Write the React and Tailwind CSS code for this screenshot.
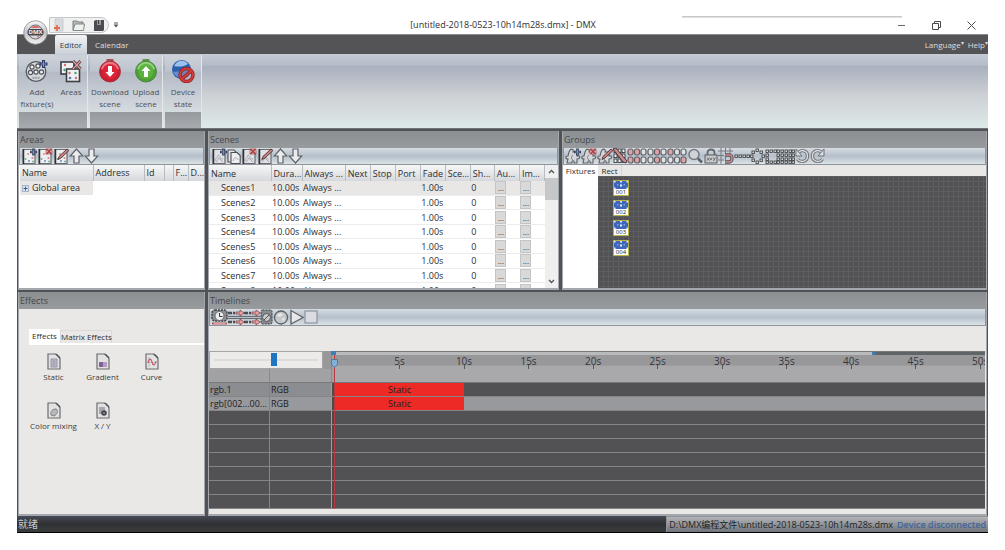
import React from "react";

const scenes = [1, 2, 3, 4, 5, 6, 7, 8];
const ticks = [5, 10, 15, 20, 25, 30, 35, 40, 45, 50];
const PERCENT_PER_SECOND = 1.985;

const sceneColumns = [
  { label: "Name", width: "w-[62px]" },
  { label: "Dura...", width: "w-[31px]" },
  { label: "Always ...", width: "w-[43px]" },
  { label: "Next", width: "w-[25px]" },
  { label: "Stop", width: "w-[25px]" },
  { label: "Port", width: "w-[25px]" },
  { label: "Fade", width: "w-[25px]" },
  { label: "Sce...", width: "w-[25px]" },
  { label: "Sh...", width: "w-[24px]" },
  { label: "Au...", width: "w-[25px]" },
  { label: "Im...", width: "w-[25px]" },
];

const areaColumns = [
  { label: "Name", width: "w-[73px]" },
  { label: "Address", width: "w-[51px]" },
  { label: "Id", width: "w-[20px]" },
  { label: "", width: "w-[9px]" },
  { label: "F...", width: "w-[15px]" },
  { label: "D...", width: "w-[17px]" },
];

const timelineRows = [
  { name: "rgb.1", type: "RGB", clip: "Static", label: "bg-[#8c8d90]", lane: "bg-[#525254]" },
  { name: "rgb[002...00...", type: "RGB", clip: "Static", label: "bg-[#98999c]", lane: "bg-[#98999c]" },
  {}, {}, {}, {}, {}, {}, {},
];

/* ---------- icons ---------- */

const Svg = ({ children, w = 16, h = 16, className = "" }) => (
  <svg width={w} height={h} viewBox={`0 0 ${w} ${h}`} fill="none" className={`shrink-0 ${className}`} aria-hidden="true">
    {children}
  </svg>
);

const PlusMark = () => (
  <>
    <path d="M12.500 0.500v7M9 4h7" stroke="#34405f" strokeWidth="2.600" />
    <path d="M12.500 1.500v5M10 4h5" stroke="#8798c4" strokeWidth="0.800" />
  </>
);

const CrossMark = () => (
  <>
    <rect x="9" y="1" width="6" height="5" fill="#f0b3b3" stroke="#923c40" strokeWidth="0.600" />
    <path d="M9.500 1l5 5M14.500 1l-5 5" stroke="#a53b40" strokeWidth="1.300" />
  </>
);

const PencilMark = () => (
  <path d="M5 11.500l1-3 8-7.500 2 1.500-8 7.500z" fill="#c98084" stroke="#4b3033" strokeWidth="0.900" />
);

const marks = { plus: <PlusMark />, cross: <CrossMark />, pencil: <PencilMark /> };

const AreaIcon = ({ mark }) => (
  <Svg>
    <path d="M2 1.500h12v14H2z" fill="#eceef0" stroke="#6b6d70" strokeWidth="1.200" />
    <path d="M2.500 1v15" stroke="#303235" strokeWidth="1.500" />
    <circle cx="7" cy="6" r="1.100" fill="#e28f8f" />
    <circle cx="4.500" cy="11" r="1.100" fill="#6bb58a" />
    <circle cx="8" cy="13" r="1" fill="#6d8fc4" />
    <circle cx="11.500" cy="10" r="1.100" fill="#d98a90" />
    <circle cx="12" cy="13.500" r="1" fill="#74b28c" />
    {marks[mark]}
  </Svg>
);

const SceneIcon = ({ mark }) => (
  <Svg>
    <path d="M2 1.500h12v14H2z" fill="#dfe1e4" stroke="#6b6d70" strokeWidth="1.200" />
    <path d="M2.500 1v15" stroke="#303235" strokeWidth="1.500" />
    <path d="M4 13c0-3 3-3 3-6 3 1 1 4 5 4M5 14l3-4 4 4" stroke="#a7aaae" />
    {marks[mark]}
  </Svg>
);

const CopyIcon = () => (
  <Svg w={14}>
    <path d="M1 2h6l3 3v9H1z" fill="#e3e5e8" stroke="#4e5054" strokeWidth="1.100" />
    <path d="M4 4.500h6l3.200 3v8H4z" fill="#eceef0" stroke="#4e5054" strokeWidth="1.100" />
    <path d="M6 13c1-4 4-4 5-1" stroke="#a7aaae" />
  </Svg>
);

const ArrowUp = () => (
  <Svg w={15}>
    <path d="M7.500 1l6.300 7H10v7H5V8H1.200z" fill="#e9ebed" stroke="#606266" strokeWidth="1.200" />
  </Svg>
);

const ArrowDown = () => (
  <Svg w={15}>
    <path d="M7.500 15l6.300-7H10V1H5v7H1.200z" fill="#e9ebed" stroke="#606266" strokeWidth="1.200" />
  </Svg>
);

const PuzzleIcon = ({ mark }) => (
  <Svg>
    <path
      d="M5 2c2-2 4 0 3 2h4v4c3-1 4 3 0 3v4H9c1-3-3-3-2 0H2l1-4C0 11 0 8 3 8l1-4z"
      fill="#d4d6d9"
      stroke="#5f6165"
      strokeWidth="1.100"
    />
    <path d="M8 7c-2 1-2 4 0 5" stroke="#77797d" />
    {marks[mark]}
  </Svg>
);

const LinkIcon = () => (
  <Svg w={14}>
    {[1, 5, 9].map((x) =>
      [1, 6, 11].map((y) => (
        <rect key={`${x}-${y}`} x={x} y={y} width="3" height="3.500" fill="#eceef0" stroke="#47494d" />
      ))
    )}
    <path d="M0 1l3-1 11 13-1 2-3-1z" fill="#c9898d" stroke="#44393b" />
  </Svg>
);

// Two rows of cells; `on` holds the indexes of the tinted ones.
const CellsIcon = ({ on }) => (
  <Svg w={20}>
    {[0, 1, 2, 3, 4, 5].map((i) => (
      <rect
        key={i}
        x={1 + (i % 3) * 6.5}
        y={i < 3 ? 1 : 9}
        width="5"
        height="6"
        rx="2"
        fill={on.includes(i) ? "#e0a2a6" : "#dfe1e4"}
        stroke="#5d5f63"
        strokeWidth="1.200"
      />
    ))}
  </Svg>
);

const LensIcon = () => (
  <Svg w={17}>
    <circle cx="7" cy="6.500" r="5" fill="#cfd3d8" stroke="#77797d" strokeWidth="1.500" />
    <path d="M11 10.500l4 4" stroke="#606266" strokeWidth="2.600" />
  </Svg>
);

const LockIcon = () => (
  <Svg w={14}>
    <path d="M3.500 8V4.500C3.500 0.500 10.500 0.500 10.500 4.500V8" stroke="#66686c" strokeWidth="1.800" />
    <rect x="1" y="7" width="12" height="8" fill="#c6c8cb" stroke="#5b5d61" />
    <path d="M3 9.500l2.500 3M5.500 9.500l-2.500 3M6 11h2M7 10v2M9 9.500l1.200 2M11.500 9.500l-2 3.500" stroke="#4c4e52" strokeWidth="0.700" />
  </Svg>
);

const MagnetIcon = () => (
  <Svg>
    <path d="M3 0v16M7.500 0v16M12 0v6M0 3h15M0 7.500h6M0 12h6" stroke="#77797d" />
    <path d="M7 7h4c4 0 4 7 0 7H7" stroke="#55575b" strokeWidth="3.400" />
    <path d="M7 7h4c4 0 4 7 0 7H7" stroke="#d0878c" strokeWidth="1.500" />
  </Svg>
);

const Cells = ({ points, w = 15 }) => (
  <Svg w={w}>
    {points.map(([x, y]) => (
      <rect key={`${x}-${y}`} x={x} y={y} width="2.400" height="2.400" fill="#e4e6e8" stroke="#3f4145" strokeWidth="0.900" />
    ))}
  </Svg>
);

const linePoints = [[1, 7], [5, 7], [9, 7], [13, 7]];
const ringPoints = [[6, 1], [10, 3], [12, 7], [10, 11], [6, 13], [2, 11], [0.6, 7], [2, 3]];
const boxPoints = [[1, 2], [5, 2], [9, 2], [12, 2], [1, 6], [1, 10], [1, 13], [5, 13], [9, 13], [12, 13], [12, 6], [12, 10]];
const gridPoints = [1, 5, 9, 12].flatMap((x) => [2, 6, 10, 13].map((y) => [x, y]));

const RotateIcon = ({ flip }) => (
  <Svg w={15}>
    <g transform={flip ? "translate(15 0) scale(-1 1)" : undefined}>
      <path d="M4 4C7 1 13 3 12.500 8.500 12 14 5 15 2.500 11" stroke="#6f7175" strokeWidth="3.200" />
      <path d="M4 4C7 1 13 3 12.500 8.500 12 14 5 15 2.500 11" stroke="#dcdee1" strokeWidth="1.300" />
      <path d="M1 1v7h6z" fill="#dcdee1" stroke="#6f7175" />
    </g>
  </Svg>
);

const ClockIcon = () => (
  <Svg w={17}>
    <rect x="1" y="1" width="15" height="11" rx="3" fill="#8d8f92" stroke="#3f4145" strokeDasharray="2 1" strokeWidth="1.500" />
    <circle cx="8.500" cy="7" r="4.500" fill="#eceef0" stroke="#66686c" />
    <path d="M8.500 4v3.500h3" stroke="#2f3134" />
    <path d="M1 14.500h15" stroke="#a8494c" strokeWidth="1.800" />
    <path d="M2.500 14.500h12" stroke="#efb0b0" strokeWidth="0.800" />
  </Svg>
);

const LanesIcon = () => (
  <Svg w={16}>
    <path d="M0 7.500h16M0 9.500h16" stroke="#6a6c70" />
    {[4, 13].map((y) => (
      <g key={y}>
        <path d={`M0 ${y}h4M5 ${y}h2`} stroke="#4b4d51" strokeWidth="2.500" />
        <path d={`M8 ${y - 1}h4v-2l4 3-4 3v-2h-4z`} fill="#eda3a3" stroke="#84484b" strokeWidth="0.800" />
      </g>
    ))}
  </Svg>
);

const FilmIcon = () => (
  <Svg w={13}>
    <rect x="1" y="1" width="11" height="14" rx="1.500" fill="#8a8c8f" stroke="#3f4145" strokeDasharray="2 1" />
    <circle cx="6.500" cy="8.500" r="4" fill="#c7c9cc" stroke="#505256" />
    <path d="M4 11l5-5" stroke="#505256" />
  </Svg>
);

const RecordIcon = () => (
  <Svg>
    <circle cx="8" cy="8.500" r="6.500" fill="#c6c8ca" stroke="#5d5f63" strokeWidth="1.300" />
    <path d="M4 7c1-3 4-3 6-2l-3 3zM9 9l3 0-2 4z" fill="#e6e8ea" />
  </Svg>
);

const PlayIcon = () => (
  <Svg w={15}>
    <path d="M2 1.500l12 7-12 6.500z" fill="#e6e8eb" stroke="#66686c" strokeWidth="1.400" />
  </Svg>
);

const StopIcon = () => (
  <Svg w={14}>
    <rect x="1" y="2" width="12" height="12" fill="#d9dde3" stroke="#8d929b" strokeWidth="1.200" />
  </Svg>
);

const AddFixtureIcon = () => (
  <Svg w={24} h={24}>
    <circle cx="11" cy="12.500" r="9.800" fill="#d7dadd" stroke="#55585c" strokeWidth="1.300" />
    {[[7, 8], [13, 7], [5.500, 13.500], [11, 13], [16.500, 13]].map(([x, y]) => (
      <circle key={`${x}-${y}`} cx={x} cy={y} r="2.100" fill="#eef0f1" stroke="#4e5155" strokeWidth="1.200" />
    ))}
    <path d="M8 19h6M8 17.500v2.500M11 17.500v2.500M14 17.500v2.500" stroke="#8c8f93" strokeWidth="0.800" />
    <path d="M18.500 1v8M14.500 5h8" stroke="#2d3c66" strokeWidth="3" />
    <path d="M18.500 2.200v5.600M15.700 5h5.600" stroke="#8497c6" strokeWidth="1" />
  </Svg>
);

const AreasIcon = () => (
  <Svg w={24} h={24}>
    <rect x="2" y="3" width="13" height="12" fill="#eef0f1" stroke="#3c3e42" strokeWidth="1.600" />
    <rect x="7.500" y="10" width="13" height="12.500" fill="#eef0f1" stroke="#3c3e42" strokeWidth="1.600" />
    <g fill="#d36c72">
      <circle cx="6" cy="6" r="1.200" />
      <circle cx="10.500" cy="14" r="1.200" />
      <circle cx="17" cy="19" r="1.200" />
    </g>
    <g fill="#4f9b72">
      <circle cx="5.500" cy="11" r="1.200" />
      <circle cx="16.500" cy="14" r="1.200" />
    </g>
    <circle cx="11" cy="19" r="1.300" fill="#5473b8" />
    <path d="M14 2l7.500 8M21.500 2l-7.500 8" stroke="#4a3236" strokeWidth="3" />
    <path d="M14 2l7.500 8M21.500 2l-7.500 8" stroke="#d99da1" strokeWidth="1.500" />
  </Svg>
);

const TransferIcon = ({ up }) => (
  <Svg w={24} h={24}>
    <path d="M8.500 1h7" stroke={up ? "#3f7f2c" : "#9f2530"} strokeWidth="1.500" />
    <circle cx="12" cy="12.500" r="10.500" fill={up ? "#4e9f36" : "#c91f31"} stroke={up ? "#3c7a2c" : "#a02632"} strokeWidth="0.800" />
    <path d="M3 10a9.200 9.200 0 0 1 18 0c-5 2-13 2-18 0z" fill={up ? "#a2d98a" : "#f28a94"} opacity="0.800" />
    <circle cx="12" cy="12.500" r="7.500" fill={up ? "#5bb23e" : "#dc2438"} />
    <path
      d={up ? "M12 7l4.500 5h-2.500v6h-4v-6H7.500z" : "M12 18l4.500-5h-2.500V7h-4v6H7.500z"}
      fill="#fff"
    />
  </Svg>
);

const DeviceIcon = () => (
  <Svg w={24} h={24}>
    <circle cx="10.500" cy="10.500" r="9.500" fill="#2c5fae" />
    <path d="M3 7c3-6 10-7 14-2-5 3-9 3-14 2z" fill="#9cc2ea" />
    <path d="M2 13c3 5 5 5 8 6V12z" fill="#5d90d4" />
    <circle cx="15.500" cy="16" r="6.500" fill="#b3a6ad" fillOpacity="0.500" stroke="#8e1d20" strokeWidth="3.400" />
    <path d="M11 20l9-8" stroke="#8e1d20" strokeWidth="3.400" />
    <circle cx="15.500" cy="16" r="6.500" stroke="#d23c3a" strokeWidth="2" />
    <path d="M11 20l9-8" stroke="#d23c3a" strokeWidth="2" />
  </Svg>
);

const EffectIcon = ({ kind }) => (
  <Svg w={14} h={17}>
    <path d="M1 1h8l4 4v11H1z" fill="#e2e2e2" stroke="#6c6d70" strokeWidth="1.200" />
    <path d="M8 1l5 5v-2L10 1z" fill="#55565a" />
    {kind === "static" && (
      <>
        <path d="M4 6h6v8H4z" fill="#c3c1cc" stroke="#85819a" strokeWidth="0.800" />
        <path d="M5.500 8h3M5.500 10h3M5.500 12h3" stroke="#85819a" strokeWidth="0.800" />
      </>
    )}
    {kind === "gradient" && (
      <>
        <path d="M3 9h8v5H3z" fill="#b49cc4" />
        <path d="M3 9h4v5H3z" fill="#7f6299" />
      </>
    )}
    {kind === "curve" && (
      <>
        <path d="M2 9.500h10M4 4v10" stroke="#a9aaad" strokeWidth="0.700" />
        <path d="M3 10c1-5 3-5 4-1s3 4 4-1" stroke="#c9565f" strokeWidth="1.100" />
      </>
    )}
    {kind === "mixing" && <path d="M4 13c-1-4 2-6 5-6 3 1 1 6-2 7z" fill="#b7b8bb" stroke="#7f8084" />}
    {kind === "xy" && (
      <>
        <path d="M3 5h6v7H3z" fill="#a7a8ab" />
        <circle cx="8" cy="11" r="2.800" fill="#47484b" />
        <circle cx="8" cy="11" r="1" fill="#8d8e91" />
      </>
    )}
  </Svg>
);

const LogoIcon = () => (
  <svg width="25" height="25" viewBox="0 0 25 25" aria-hidden="true">
    <defs>
      <linearGradient id="orb" x1="0" y1="0" x2="0" y2="1">
        <stop offset="0" stopColor="#fafafa" />
        <stop offset="0.500" stopColor="#c2c3c6" />
        <stop offset="1" stopColor="#f1f1f2" />
      </linearGradient>
    </defs>
    <circle cx="12.500" cy="12.500" r="11.800" fill="url(#orb)" stroke="#8d8e91" strokeWidth="0.800" />
    <circle cx="12.500" cy="12" r="7" fill="#d9d9da" stroke="#6d6e71" />
    <path d="M8 8c2-3 7-3 9 0zM14 16l3-1-2 3z" fill="#db6b70" />
    <rect x="4.500" y="9" width="16" height="6.500" rx="2.500" fill="#47484c" />
    <text x="12.500" y="14.400" textAnchor="middle" fontSize="6" fontWeight="700" fill="#f4f4f5">DMX</text>
  </svg>
);

const NewFileIcon = () => (
  <Svg w={11} h={14}>
    <path d="M2 1h8v12H2z" fill="#dadbe0" stroke="#c3c5cb" strokeWidth="0.800" />
    <path d="M4 7v6M1 10h6" stroke="#e0714f" strokeWidth="1.800" />
  </Svg>
);

const FolderIcon = () => (
  <Svg w={13} h={13}>
    <path d="M1 2h4l1 1h5v8H1z" fill="#b8bdb9" stroke="#77807b" />
    <path d="M3 5h9.500l-1 6.500H1z" fill="#eff1ef" stroke="#838b86" />
  </Svg>
);

const SaveIcon = () => (
  <Svg w={12} h={13}>
    <path d="M1 2l2-1h8v10l-1 1H1z" fill="#4b4c50" />
    <path d="M4 1h4v5H4z" fill="#96979a" />
    <path d="M5.500 1v4" stroke="#3c3d40" />
  </Svg>
);

/* ---------- building blocks ---------- */

const ToolButton = ({ label, children }) => (
  <button type="button" aria-label={label} className="shrink-0">
    {children}
  </button>
);

const Toolbar = ({ label, children }) => (
  <div
    role="toolbar"
    aria-label={label}
    className="flex h-[17px] shrink-0 items-center overflow-hidden border border-t-0 border-[#8f949c] bg-linear-to-b from-[#d6dde2] via-[#b5bfcb] to-[#dbe3e5] pl-px"
  >
    {children}
  </div>
);

const Panel = ({ title, className = "", children }) => (
  <section className={`flex min-w-0 flex-col overflow-hidden border-x border-b-2 border-[#a3a8af] bg-[#e9e8e6] ${className}`}>
    <h2 className="h-[17px] shrink-0 bg-linear-to-b from-[#8b8f91] to-[#989b9e] px-px text-[9px] leading-[18px] text-[#45474b]">
      {title}
    </h2>
    {children}
  </section>
);

const HeaderRow = ({ columns }) => (
  <thead>
    <tr className="h-4 bg-linear-to-b from-[#f7f7f7] to-[#d5d8dc]">
      {columns.map(({ label, width }, i) => (
        <th
          key={i}
          scope="col"
          className={`overflow-hidden border-r border-[#b9bcc1] p-0 pl-0.5 text-left font-normal whitespace-nowrap ${width}`}
        >
          {label}
        </th>
      ))}
    </tr>
  </thead>
);

const RibbonGroup = ({ children }) => (
  <div className="flex h-[73px] flex-col border-r border-[#e4e7ea] bg-[linear-gradient(#cdd2da_0%,#bec4ce_22%,#b5bbc6_24%,#e2e9ea_100%)]">
    <div className="flex flex-1 items-start gap-1 px-0.5 pt-1">{children}</div>
    <div className="h-4 bg-linear-to-b from-[#96999d] to-[#a7aaae]" />
  </div>
);

const RibbonButton = ({ icon, lines, width }) => (
  <button type="button" className={`flex flex-col items-center text-[8px] leading-3 text-[#4d5157] ${width}`}>
    {icon}
    <span className="mt-[3px]">
      {lines.map((line) => (
        <span key={line} className="block whitespace-nowrap">{line}</span>
      ))}
    </span>
  </button>
);

/* ---------- sections ---------- */

const TitleBar = () => (
  <header className="relative flex h-[18px] items-center bg-white">
    <div className="absolute top-0 right-[86px] left-[665px] h-0.5 bg-linear-to-b from-[#bcbdc1] to-[#ececee]" />
    <div className="relative ml-8 flex h-4 w-[60px] items-center justify-center gap-2 rounded-r-full border border-[#c5c6c9] bg-[#f0f0f1]">
      <button type="button" aria-label="New"><NewFileIcon /></button>
      <button type="button" aria-label="Open"><FolderIcon /></button>
      <button type="button" aria-label="Save"><SaveIcon /></button>
    </div>
    <button type="button" aria-label="Customize toolbar" className="ml-1">
      <Svg w={6} h={6}>
        <path d="M1 1h4" stroke="#55575b" />
        <path d="M0.500 2.500h5L3 5.500z" fill="#55575b" />
      </Svg>
    </button>
    <h1 className="min-w-0 flex-1 pr-2.5 text-center text-[9px] text-[#2e2e30]">
      [untitled-2018-0523-10h14m28s.dmx] - DMX
    </h1>
    <div className="mr-3 flex items-center gap-[26px]">
      <button type="button" aria-label="Minimize">
        <Svg w={9} h={9}><path d="M1 4.500h7" stroke="#6a6a6d" /></Svg>
      </button>
      <button type="button" aria-label="Restore">
        <Svg w={9} h={9}>
          <path d="M0.500 2.500h6v6h-6zM2.500 2.500v-2h6v6h-2" stroke="#4a4a4d" />
        </Svg>
      </button>
      <button type="button" aria-label="Close">
        <Svg w={9} h={9}><path d="M0.500 0.500l8 8M8.500 0.500l-8 8" stroke="#4a4a4d" /></Svg>
      </button>
    </div>
    <button type="button" aria-label="Application menu" className="absolute top-1 left-1.5 z-10">
      <LogoIcon />
    </button>
  </header>
);

const TabBar = () => (
  <nav className="flex h-5 items-stretch border-t border-[#8b8b8d] bg-[#545456] text-[8px] text-[#dcdcde]">
    <button type="button" className="ml-[38px] w-8 rounded-t-xs bg-linear-to-b from-[#f2f4f6] to-[#cbd0d8] text-[#3a3d42]">
      Editor
    </button>
    <button type="button" className="ml-2">Calendar</button>
    <div className="ml-auto flex items-center gap-1">
      <button type="button">Language<span className="align-top text-[6px]">▾</span></button>
      <button type="button">Help<span className="align-top text-[6px]">▾</span></button>
    </div>
  </nav>
);

const Ribbon = () => (
  <div className="flex h-[75px] gap-0.5 border-b border-[#707478] bg-[linear-gradient(#c6cbd5_0%,#b4bcc9_15%,#a9b1be_17%,#cdd0d4_55%,#dde9e9_100%)] px-0.5 pt-px">
    <RibbonGroup>
      <RibbonButton icon={<AddFixtureIcon />} lines={["Add", "fixture(s)"]} width="w-8" />
      <RibbonButton icon={<AreasIcon />} lines={["Areas"]} width="w-7" />
    </RibbonGroup>
    <RibbonGroup>
      <RibbonButton icon={<TransferIcon />} lines={["Download", "scene"]} width="w-9" />
      <RibbonButton icon={<TransferIcon up />} lines={["Upload", "scene"]} width="w-7" />
    </RibbonGroup>
    <RibbonGroup>
      <RibbonButton icon={<DeviceIcon />} lines={["Device", "state"]} width="w-8" />
    </RibbonGroup>
  </div>
);

const AreasPanel = () => (
  <Panel title="Areas">
    <Toolbar label="Areas">
      <ToolButton label="Add area"><AreaIcon mark="plus" /></ToolButton>
      <ToolButton label="Delete area"><AreaIcon mark="cross" /></ToolButton>
      <ToolButton label="Edit area"><AreaIcon mark="pencil" /></ToolButton>
      <ToolButton label="Move up"><ArrowUp /></ToolButton>
      <ToolButton label="Move down"><ArrowDown /></ToolButton>
    </Toolbar>
    <div className="min-h-0 flex-1 bg-white px-px">
      <table className="w-full table-fixed border-collapse text-[9px] leading-[14px] text-[#2c2d30]">
        <HeaderRow columns={areaColumns} />
        <tbody>
          <tr>
            <td className="bg-[#e9e7e5] p-0 whitespace-nowrap">
              <div className="flex h-[14px] items-center gap-[3px] pl-0.5">
                <button type="button" aria-label="Expand Global area" className="grid size-[7px] place-items-center border border-[#a7b4c8] bg-[#dbe5f3]">
                  <Svg w={5} h={5}><path d="M0.500 2.500h4M2.500 0.500v4" stroke="#3a5f9e" /></Svg>
                </button>
                <span>Global area</span>
              </div>
            </td>
          </tr>
        </tbody>
      </table>
    </div>
  </Panel>
);

const MoreButton = ({ label }) => (
  <button type="button" aria-label={label} className="block h-[13px] w-[11px] border border-[#c4c4c4] bg-[#d9d9d9] text-[8px] leading-[11px]">
    ...
  </button>
);

const ScenesPanel = () => (
  <Panel title="Scenes">
    <Toolbar label="Scenes">
      <ToolButton label="Add scene"><SceneIcon mark="plus" /></ToolButton>
      <ToolButton label="Copy scene"><CopyIcon /></ToolButton>
      <ToolButton label="Delete scene"><SceneIcon mark="cross" /></ToolButton>
      <ToolButton label="Edit scene"><SceneIcon mark="pencil" /></ToolButton>
      <ToolButton label="Move up"><ArrowUp /></ToolButton>
      <ToolButton label="Move down"><ArrowDown /></ToolButton>
    </Toolbar>
    <div className="flex min-h-0 flex-1 bg-white">
      <div className="min-w-0 flex-1 overflow-hidden">
        <table className="h-[133px] w-full table-fixed border-collapse text-[9px] leading-[13px] text-[#2c2d30]">
          <HeaderRow columns={sceneColumns} />
          <tbody>
            {scenes.map((n) => (
              <tr key={n} className={`border-b border-[#ececec] whitespace-nowrap ${n === 1 ? "bg-[#e9e7e5]" : ""}`}>
                <td className="p-0 pl-3">Scenes{n}</td>
                <td className="p-0 pl-px">10.00s</td>
                <td className="p-0 pl-px">Always ...</td>
                <td /><td /><td />
                <td className="p-0 pl-px">1.00s</td>
                <td />
                <td className="p-0 pl-px">0</td>
                <td className="p-0 pl-px"><MoreButton label={`Audio of Scenes${n}`} /></td>
                <td className="p-0 pl-px"><MoreButton label={`Image of Scenes${n}`} /></td>
              </tr>
            ))}
          </tbody>
        </table>
      </div>
      <div className="flex w-[13px] flex-col items-center bg-[#efefef]">
        <button type="button" aria-label="Scroll up" className="grid h-[13px] place-items-center">
          <Svg w={7} h={5}><path d="M1 4l2.500-2.500L6 4" stroke="#505256" strokeWidth="1.300" /></Svg>
        </button>
        <div className="h-[22px] w-full bg-[#c6c7c9]" />
        <button type="button" aria-label="Scroll down" className="mt-auto grid h-[13px] place-items-center">
          <Svg w={7} h={5}><path d="M1 1l2.500 2.500L6 1" stroke="#505256" strokeWidth="1.300" /></Svg>
        </button>
      </div>
    </div>
  </Panel>
);

const Fixture = ({ id }) => (
  <div className="flex h-4 w-4 flex-col overflow-hidden border border-[#b5b24a] bg-white">
    <Svg w={14} h={8} className="bg-[#3f66bd]">
      <path d="M0 0h1.500v1.500H0zM6 0h2v1.500H6zM12.500 0H14v1.500h-1.500zM0 6.500h1.500V8H0zM6 3.500h2v2H6zM12.500 6.500H14V8h-1.500z" fill="#e9eef9" />
      <path d="M3 3h1.500v1.500H3zM9.500 3H11v1.500H9.500z" fill="#86a2dc" />
    </Svg>
    <span className="text-center text-[6px] leading-[6px] text-[#1f2023]">{id}</span>
  </div>
);

const GroupsPanel = () => (
  <Panel title="Groups">
    <Toolbar label="Groups">
      <ToolButton label="Add group"><PuzzleIcon mark="plus" /></ToolButton>
      <ToolButton label="Delete group"><PuzzleIcon mark="cross" /></ToolButton>
      <ToolButton label="Edit group"><PuzzleIcon mark="pencil" /></ToolButton>
      <ToolButton label="Order"><LinkIcon /></ToolButton>
      <ToolButton label="Select odd"><CellsIcon on={[0, 1, 3, 4]} /></ToolButton>
      <ToolButton label="Select even"><CellsIcon on={[1, 4]} /></ToolButton>
      <ToolButton label="Select diagonal"><CellsIcon on={[0, 5]} /></ToolButton>
      <ToolButton label="Zoom"><LensIcon /></ToolButton>
      <ToolButton label="Lock position"><LockIcon /></ToolButton>
      <ToolButton label="Snap to grid"><MagnetIcon /></ToolButton>
      <ToolButton label="Arrange in line"><Cells points={linePoints} w={16} /></ToolButton>
      <ToolButton label="Arrange in circle"><Cells points={ringPoints} /></ToolButton>
      <ToolButton label="Arrange in rectangle"><Cells points={boxPoints} /></ToolButton>
      <ToolButton label="Arrange in matrix"><Cells points={gridPoints} /></ToolButton>
      <ToolButton label="Rotate left"><RotateIcon /></ToolButton>
      <ToolButton label="Rotate right"><RotateIcon flip /></ToolButton>
    </Toolbar>
    <div className="flex h-[11px] shrink-0 text-[8px] leading-[10px] text-[#2c2d30]">
      <button type="button" className="w-[35px] bg-white">Fixtures</button>
      <button type="button" className="w-6 border-r border-[#d4d4d4]">Rect</button>
    </div>
    <div className="flex min-h-0 flex-1">
      <div className="w-[35px] bg-white" />
      <div className="flex flex-1 flex-col gap-1 bg-[#525254] bg-[linear-gradient(#5d5d5f_1px,transparent_1px),linear-gradient(90deg,#5d5d5f_1px,transparent_1px)] bg-size-[5px_5px] pt-1 pl-[15px]">
        {["001", "002", "003", "004"].map((id) => (
          <Fixture key={id} id={id} />
        ))}
      </div>
    </div>
  </Panel>
);

const Effect = ({ kind, label }) => (
  <button type="button" className="flex h-[49px] flex-col items-center gap-0.5 whitespace-nowrap">
    <EffectIcon kind={kind} />
    <span>{label}</span>
  </button>
);

const EffectsPanel = () => (
  <Panel title="Effects">
    <div className="mt-[21px] ml-2.5 flex h-[15px] shrink-0 items-end border-b-2 border-white text-[8px] leading-3 text-[#2c2d30]">
      <button type="button" className="h-[14px] w-[31px] bg-white">Effects</button>
      <button type="button" className="h-[13px] w-[52px] border border-b-0 border-[#dadada] whitespace-nowrap">Matrix Effects</button>
    </div>
    <div className="grid grid-cols-[49px_49px_49px] pt-2 pl-2.5 text-[8px] leading-[10px] text-[#3c3d40]">
      <Effect kind="static" label="Static" />
      <Effect kind="gradient" label="Gradient" />
      <Effect kind="curve" label="Curve" />
      <Effect kind="mixing" label="Color mixing" />
      <Effect kind="xy" label="X / Y" />
    </div>
  </Panel>
);

const Ruler = () => (
  <div className="relative min-w-0 flex-1 overflow-hidden bg-linear-to-b from-[#98989b] from-45% to-[#a9a9ac] to-50%">
    <div className="flex h-1 border-t border-[#77787b] bg-[#606466]">
      <div className="w-[83%] border-r-[3px] border-[#3f7fb8] bg-[#b9babc]" />
    </div>
    {ticks.map((t) => (
      <div
        key={t}
        className="absolute top-1 flex w-8 -translate-x-1/2 flex-col items-center text-[10px] leading-3 text-[#35363a]"
        style={{ left: `${t * PERCENT_PER_SECOND}%` }}
      >
        {t}s
        <span className="-mt-0.5 h-1 w-px bg-[#55565a]" />
      </div>
    ))}
  </div>
);

const TimelinesPanel = () => (
  <Panel title="Timelines" className="col-span-2">
    <Toolbar label="Timelines">
      <ToolButton label="Duration"><ClockIcon /></ToolButton>
      <ToolButton label="Shift"><LanesIcon /></ToolButton>
      <ToolButton label="Spread"><LanesIcon /></ToolButton>
      <ToolButton label="Preview"><FilmIcon /></ToolButton>
      <ToolButton label="Record"><RecordIcon /></ToolButton>
      <ToolButton label="Play"><PlayIcon /></ToolButton>
      <ToolButton label="Stop"><StopIcon /></ToolButton>
    </Toolbar>
    <div className="relative mt-[25px] mr-px">
      <div className="flex h-8 border-b border-[#77787b]">
        <div className="flex w-[122px] shrink-0 flex-col bg-[#98989b]">
          <div className="h-[18px] w-[114px] border border-[#a5a5a8] bg-[#ecebe9] px-1">
            <input
              type="range"
              aria-label="Timeline zoom"
              defaultValue="58"
              className="block h-4 w-full appearance-none bg-transparent [&::-webkit-slider-runnable-track]:h-[2px] [&::-webkit-slider-runnable-track]:bg-[#dcdcda] [&::-webkit-slider-thumb]:-mt-[6px] [&::-webkit-slider-thumb]:h-[13px] [&::-webkit-slider-thumb]:w-[6px] [&::-webkit-slider-thumb]:appearance-none [&::-webkit-slider-thumb]:bg-[#1f74c4]"
            />
          </div>
          <div className="flex flex-1 bg-[#a2a2a5]">
            <div className="w-[61px] border-r border-[#88898c]" />
          </div>
        </div>
        <div className="w-1 shrink-0 border-l border-[#88898c] bg-[#a2a2a5]" />
        <Ruler />
      </div>
      {timelineRows.map(({ name, type, clip, label = "bg-[#525254]", lane = "bg-[#525254]" }, i) => (
        <div key={i} className="flex h-[14px] border-b border-[#858588] text-[9px] leading-[13px] text-[#1f2023]">
          <div className={`w-[61px] shrink-0 overflow-hidden border-r border-[#858588] pl-px whitespace-nowrap ${label}`}>{name}</div>
          <div className={`w-[61px] shrink-0 pl-px ${label}`}>{type}</div>
          <div className="w-1 shrink-0 border-l border-[#a0a0a2] bg-[#4a4a4c]" />
          <div className={`min-w-0 flex-1 ${lane}`}>
            {clip && (
              <div className="h-full bg-[#ee2a26] text-center" style={{ width: `${10 * PERCENT_PER_SECOND}%` }}>
                {clip}
              </div>
            )}
          </div>
        </div>
      ))}
      <div className="absolute top-0 bottom-0 left-[125px] w-px bg-[#b8383c]">
        <Svg w={7} h={18} className="-ml-[3px]">
          <path d="M0 0h5v4H0z" fill="#3f7fb8" />
          <path d="M0.500 8.500h6v5l-3 3-3-3z" fill="#7fb0dc" stroke="#4a6f94" strokeWidth="0.800" />
        </Svg>
      </div>
    </div>
  </Panel>
);

const StatusBar = () => (
  <footer className="flex h-[17px] border-b border-black bg-linear-to-b from-[#474a56] via-[#303133] to-[#3b3c3c] text-[9px] leading-4">
    <span className="px-px text-[10px] text-[#c9cacc]">就绪</span>
    <div className="ml-auto flex gap-1 border-t border-l border-[#8f9194] bg-linear-to-b from-[#b2b4b7] to-[#70757c] px-0.5 whitespace-nowrap">
      <span className="text-[#222326]">D:\DMX编程文件\untitled-2018-0523-10h14m28s.dmx</span>
      <span className="font-semibold text-[#41659a]">Device disconnected</span>
    </div>
  </footer>
);

export default function App() {
  return (
    <div className="min-h-screen bg-white px-[17px] pt-4 font-['Open_Sans','Noto_Sans_CJK_SC',sans-serif]">
      <TitleBar />
      <TabBar />
      <Ribbon />
      <main className="grid grid-cols-[187px_minmax(0,351fr)_minmax(0,425fr)] grid-rows-[159px_224px] gap-x-[3px] gap-y-0.5 bg-[#505256] px-px pt-0.5">
        <AreasPanel />
        <ScenesPanel />
        <GroupsPanel />
        <EffectsPanel />
        <TimelinesPanel />
      </main>
      <StatusBar />
    </div>
  );
}
